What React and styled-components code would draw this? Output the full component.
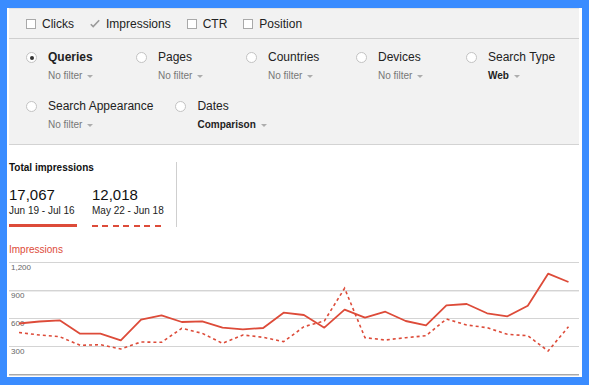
import React from 'react';
import styled, { createGlobalStyle } from 'styled-components';

const GlobalStyle = createGlobalStyle`
  html, body { margin: 0; padding: 0; background: #3a8cff; }
  body { font-family: "Liberation Sans", Arial, Helvetica, sans-serif; }
  * { box-sizing: border-box; }
`;

const RED = '#dd4b39';

const Frame = styled.div`
  width: 589px;
  height: 385px;
  padding: 8px 7px;
  background: #3a8cff;
`;

const Panel = styled.div`
  height: 100%;
  background: #fff;
  padding: 0 3px 0 2px;
  display: flex;
  flex-direction: column;
  overflow: hidden;
`;

const Filters = styled.section`
  background: #f2f2f2;
  border-top: 1px solid #e3e3e3;
  border-bottom: 1px solid #d3d3d3;
`;

const MetricBar = styled.div`
  height: 30px;
  display: flex;
  align-items: center;
  gap: 16px;
  padding-left: 17px;
  border-bottom: 1px solid #cfcfcf;
`;

const Toggle = styled.label`
  display: flex;
  align-items: center;
  gap: 6px;
  font-size: 12px;
  line-height: 14px;
  color: #222;
`;

const Box = styled.span`
  width: 10px;
  height: 10px;
  border: 1px solid #a9a9a9;
  background: #fff;
  display: block;
`;

const Check = () => (
  <svg width="10" height="10" viewBox="0 0 10 10" style={{ display: 'block' }}>
    <polyline points="0.8,5.2 3.2,7.6 9.2,1.2" fill="none" stroke="#9a9a9a" strokeWidth="1.6" />
  </svg>
);

const Dimensions = styled.div`
  display: flex;
  flex-direction: column;
  gap: 17px;
  padding: 11px 0 13px 17px;
`;

const RadioRow = styled.div`
  display: flex;
  align-items: flex-start;
`;

const RadioItem = styled.div`
  display: flex;
  align-items: flex-start;
  gap: 11px;
  margin-right: 22px;
`;

const Radio = styled.span`
  position: relative;
  width: 11px;
  height: 11px;
  margin-top: 2px;
  border-radius: 50%;
  border: 1px solid #c3c3c3;
  background: #fff;
  flex: none;
  &::after {
    content: '';
    display: ${p => (p.$on ? 'block' : 'none')};
    position: absolute;
    left: 2.5px;
    top: 2.5px;
    width: 4px;
    height: 4px;
    border-radius: 50%;
    background: #333;
  }
`;

const RadioBody = styled.div`
  min-width: 66px;
  display: flex;
  flex-direction: column;
`;

const RadioLabel = styled.div`
  font-size: 12px;
  line-height: 14px;
  color: #222;
  font-weight: ${p => (p.$bold ? 700 : 400)};
  white-space: nowrap;
`;

const FilterSel = styled.div`
  margin-top: 6px;
  display: flex;
  align-items: center;
  gap: 5px;
  font-size: 10px;
  line-height: 12px;
  white-space: nowrap;
  color: ${p => (p.$set ? '#222' : '#777')};
  font-weight: ${p => (p.$set ? 700 : 400)};
`;

const Caret = styled.span`
  width: 0;
  height: 0;
  border-left: 3px solid transparent;
  border-right: 3px solid transparent;
  border-top: 3px solid #adadad;
  margin-top: 1px;
`;

const Summary = styled.div`
  margin-top: 17px;
  display: flex;
`;

const SummaryCard = styled.div`
  width: 168px;
  border-right: 1px solid #cfcfcf;
`;

const SummaryTitle = styled.div`
  font-size: 10px;
  line-height: 12px;
  font-weight: 700;
  color: #111;
`;

const Metrics = styled.div`
  display: flex;
  gap: 15px;
  margin-top: 12px;
`;

const Metric = styled.div`
  min-width: 68px;
`;

const MetricValue = styled.div`
  font-size: 15px;
  line-height: 17px;
  color: #111;
`;

const MetricRange = styled.div`
  margin-top: 2px;
  font-size: 10px;
  line-height: 12px;
  color: #222;
  white-space: nowrap;
`;

const Underline = styled.div`
  margin-top: ${p => (p.$dashed ? '8px' : '7px')};
  height: ${p => (p.$dashed ? '2px' : '3px')};
  background: ${p =>
    p.$dashed
      ? `repeating-linear-gradient(to right, ${RED} 0 6px, transparent 6px 10.5px)`
      : RED};
`;

const ChartTitle = styled.div`
  margin-top: 17px;
  font-size: 10px;
  line-height: 12px;
  color: ${RED};
`;

const ChartSvg = styled.svg`
  display: block;
  margin-top: 2px;
  flex: none;
`;

const current = [541, 562, 575, 432, 432, 361, 582, 629, 557, 565, 496, 479, 493, 657, 632, 496, 689, 603, 667, 568, 522, 736, 750, 650, 618, 732, 1075, 986];
const previous = [445, 418, 400, 307, 314, 268, 343, 340, 490, 436, 329, 418, 393, 346, 507, 568, 918, 389, 364, 389, 410, 589, 525, 496, 425, 410, 246, 507];

const W = 570;
const H = 119;
const BASE = 116;
const yOf = v => BASE - (v * 28) / 300;
const xOf = i => 10 + i * 20.35;
const pts = data => data.map((v, i) => `${xOf(i).toFixed(1)},${yOf(v).toFixed(1)}`).join(' ');

const Chart = () => (
  <ChartSvg width={W} height={H} viewBox={`0 0 ${W} ${H}`}>
    {[1200, 900, 600, 300].map(v => (
      <line key={v} x1="0" x2={W} y1={yOf(v) + 0.5} y2={yOf(v) + 0.5} stroke="#d4d4d4" strokeWidth="1" />
    ))}
    <line x1="0" x2={W} y1={yOf(900) + 1.5} y2={yOf(900) + 1.5} stroke="#ececec" strokeWidth="1" />
    <line x1="0" x2={W} y1={BASE + 0.5} y2={BASE + 0.5} stroke="#a9a9a9" strokeWidth="1" />
    <line x1="0" x2={W} y1={BASE + 1.5} y2={BASE + 1.5} stroke="#d6d6d6" strokeWidth="1" />
    {[1200, 900, 600, 300].map(v => (
      <text key={v} x="2" y={yOf(v) + 8} fontSize="8" fill="#666" fontFamily="Liberation Sans, Arial, sans-serif">
        {v.toLocaleString('en-US')}
      </text>
    ))}
    <polyline points={pts(previous)} fill="none" stroke={RED} strokeWidth="1.6" strokeDasharray="3 3" />
    <polyline points={pts(current)} fill="none" stroke={RED} strokeWidth="1.8" strokeLinejoin="round" />
  </ChartSvg>
);

const metricsList = [
  { name: 'Clicks', on: false },
  { name: 'Impressions', on: true },
  { name: 'CTR', on: false },
  { name: 'Position', on: false },
];

const rows = [
  [
    { name: 'Queries', sel: true, filter: 'No filter' },
    { name: 'Pages', filter: 'No filter' },
    { name: 'Countries', filter: 'No filter' },
    { name: 'Devices', filter: 'No filter' },
    { name: 'Search Type', filter: 'Web', set: true },
  ],
  [
    { name: 'Search Appearance', filter: 'No filter' },
    { name: 'Dates', filter: 'Comparison', set: true },
  ],
];

export default function App() {
  return (
    <>
      <GlobalStyle />
      <Frame>
        <Panel>
          <Filters>
            <MetricBar>
              {metricsList.map(m => (
                <Toggle key={m.name}>
                  {m.on ? <Check /> : <Box />}
                  {m.name}
                </Toggle>
              ))}
            </MetricBar>
            <Dimensions>
              {rows.map((row, ri) => (
                <RadioRow key={ri}>
                  {row.map(d => (
                    <RadioItem key={d.name}>
                      <Radio $on={d.sel} />
                      <RadioBody>
                        <RadioLabel $bold={d.sel}>{d.name}</RadioLabel>
                        <FilterSel $set={d.set}>
                          {d.filter}
                          <Caret />
                        </FilterSel>
                      </RadioBody>
                    </RadioItem>
                  ))}
                </RadioRow>
              ))}
            </Dimensions>
          </Filters>
          <Summary>
            <SummaryCard>
              <SummaryTitle>Total impressions</SummaryTitle>
              <Metrics>
                <Metric>
                  <MetricValue>17,067</MetricValue>
                  <MetricRange>Jun 19 - Jul 16</MetricRange>
                  <Underline />
                </Metric>
                <Metric>
                  <MetricValue>12,018</MetricValue>
                  <MetricRange>May 22 - Jun 18</MetricRange>
                  <Underline $dashed />
                </Metric>
              </Metrics>
            </SummaryCard>
          </Summary>
          <ChartTitle>Impressions</ChartTitle>
          <Chart />
        </Panel>
      </Frame>
    </>
  );
}
